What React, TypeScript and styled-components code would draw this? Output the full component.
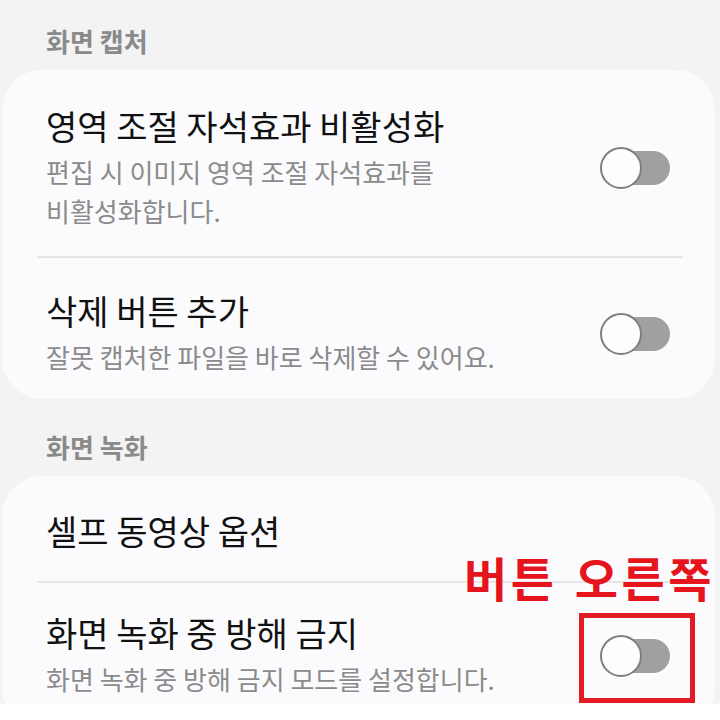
import styled, { createGlobalStyle } from "styled-components";

const GlobalStyle = createGlobalStyle`
  html, body {
    margin: 0;
    padding: 0;
    background: #ffffff;
  }
  body {
    font-family: "Noto Sans CJK KR", "Noto Sans", sans-serif;
  }
`;

const Screen = styled.div`
  position: relative;
  width: 720px;
  height: 704px;
  overflow: hidden;
  background: #f3f3f3;
`;

const SectionHeader = styled.div<{ $top: number }>`
  padding: ${(p) => p.$top}px 0 14px 46px;
  font-size: 26px;
  line-height: 30px;
  font-weight: 700;
  color: #8a8a8a;
`;

const Card = styled.div`
  margin: 0 5px 0 2px;
  background: #fbfbfd;
  border-radius: 40px;
  overflow: hidden;
`;

const Row = styled.div<{ $pt: number; $pb: number }>`
  display: flex;
  align-items: center;
  justify-content: space-between;
  padding: ${(p) => p.$pt}px 45px ${(p) => p.$pb}px 44px;
`;

const TextBlock = styled.div`
  display: flex;
  flex-direction: column;
  gap: 6px;
  white-space: nowrap;
`;

const Title = styled.div`
  font-size: 34px;
  line-height: 40px;
  color: #111;
`;

const Subtitle = styled.div`
  font-size: 26px;
  line-height: 39px;
  color: #8b8b8b;
`;

const Divider = styled.div`
  height: 2px;
  margin: 0 32px 0 35px;
  background: #e6e6e8;
`;

const Track = styled.div`
  position: relative;
  flex: none;
  width: 70px;
  height: 42px;
  display: flex;
  align-items: center;
  justify-content: flex-end;
`;

const Rail = styled.div`
  width: 66px;
  height: 34px;
  border-radius: 17px;
  background: #a0a0a0;
`;

const Knob = styled.div`
  position: absolute;
  left: 0;
  top: 0;
  width: 38px;
  height: 38px;
  border-radius: 50%;
  border: 2px solid #7e7e7e;
  background: #fdfdfd;
`;

/* red callout drawn over the list */
const Note = styled.div`
  position: absolute;
  left: 464px;
  top: 547px;
  font-size: 47px;
  line-height: 60px;
  font-weight: 700;
  letter-spacing: 3.5px;
  word-spacing: 3px;
  color: #e5141d;
  white-space: nowrap;
`;

const Frame = styled.div`
  position: absolute;
  left: 579px;
  top: 613px;
  width: 106px;
  height: 80px;
  border: 5px solid #e31b23;
`;

const Toggle = () => (
  <Track>
    <Rail />
    <Knob />
  </Track>
);

export default function App() {
  return (
    <>
      <GlobalStyle />
      <Screen>
        <SectionHeader $top={26}>화면 캡처</SectionHeader>
        <Card>
          <Row $pt={36} $pb={26}>
            <TextBlock>
              <Title>영역 조절 자석효과 비활성화</Title>
              <Subtitle>
                편집 시 이미지 영역 조절 자석효과를
                <br />
                비활성화합니다.
              </Subtitle>
            </TextBlock>
            <Toggle />
          </Row>
          <Divider />
          <Row $pt={33} $pb={23}>
            <TextBlock>
              <Title>삭제 버튼 추가</Title>
              <Subtitle>잘못 캡처한 파일을 바로 삭제할 수 있어요.</Subtitle>
            </TextBlock>
            <Toggle />
          </Row>
        </Card>
        <SectionHeader $top={33}>화면 녹화</SectionHeader>
        <Card>
          <Row $pt={35} $pb={30}>
            <TextBlock>
              <Title>셀프 동영상 옵션</Title>
            </TextBlock>
          </Row>
          <Divider />
          <Row $pt={30} $pb={30}>
            <TextBlock>
              <Title>화면 녹화 중 방해 금지</Title>
              <Subtitle>화면 녹화 중 방해 금지 모드를 설정합니다.</Subtitle>
            </TextBlock>
            <Toggle />
          </Row>
        </Card>
        <Note>버튼 오른쪽</Note>
        <Frame />
      </Screen>
    </>
  );
}
